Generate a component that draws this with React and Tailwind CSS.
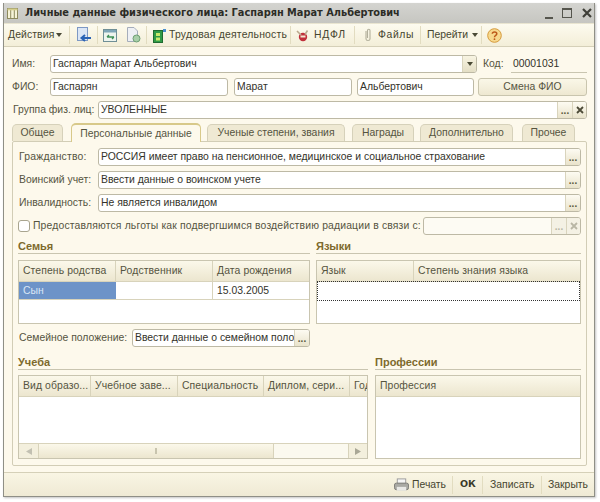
function Sep({ cls = "mx-[5px]" }) {
  return <div className={"w-px h-[18px] bg-[#e2dcc0] shrink-0 " + cls} />;
}
function Dots({ disabled }) {
  return (
    <div className={"w-[15px] h-full shrink-0 flex items-end justify-center pb-[2px] text-[10px] leading-[10px] font-bold " + (disabled ? "text-[#b9b6a5] bg-[#f4f1e4]" : "text-[#5c5a3c] bg-gradient-to-b from-[#fdfbf2] to-[#e9e3cb]") + " border-l border-[#d9d4bd]"}>...</div>
  );
}
function Field({ text, className = "", children }) {
  return (
    <div className={"h-[18px] bg-white border border-[#bdb9a5] rounded-[3px] flex items-stretch overflow-hidden shrink-0 " + className}>
      <div className="flex-1 min-w-0 pl-[2px] leading-[16px] whitespace-nowrap overflow-hidden text-[#33322a]">{text}</div>
      {children}
    </div>
  );
}
function Label({ children, className = "" }) {
  return <div className={"leading-[18px] whitespace-nowrap shrink-0 text-[#55543f] " + className}>{children}</div>;
}
function Heading({ children, className = "" }) {
  return (
    <div className={"border-b border-[#c9c5b0] h-[14px] shrink-0 " + className}>
      <div className="font-bold text-[#7d6a2c] leading-[12px] text-[11px] whitespace-nowrap">{children}</div>
    </div>
  );
}
function Th({ children, className = "" }) {
  return <div className={"h-full pl-[4px] leading-[20px] tracking-[0.01em] text-[#55543f] whitespace-nowrap overflow-hidden border-r border-[#d8d3bb] shrink-0 " + className}>{children}</div>;
}
function Thead({ children }) {
  return <div className="h-[21px] flex shrink-0 bg-gradient-to-b from-[#fbf8ea] to-[#ece6cf] border-b border-[#d8d3bb]">{children}</div>;
}
function Tab({ children, active, className = "" }) {
  return (
    <div className={"rounded-t-[5px] border border-b-0 text-center whitespace-nowrap shrink-0 text-[#55543f] " + (active ? "h-[19px] bg-[#fdf9ec] border-[#d8c98a] border-t-2 leading-[17px] relative z-10" : "h-[17px] mt-[1px] bg-[#efe9d3] border-[#d6d1ba] leading-[16px]") + " " + className}>{children}</div>
  );
}
function CloseX({ color = "#4d4b38" }) {
  return (
    <svg width="8" height="8" viewBox="0 0 8 8"><path d="M1 1L7 7M7 1L1 7" stroke={color} strokeWidth="1.8" /></svg>
  );
}
function Caret() {
  return <svg width="6" height="4" viewBox="0 0 6 4" className="shrink-0"><path d="M0 0H6L3 4Z" fill="#4a4935" /></svg>;
}

export default function App() {
  return (
    <div className="w-[600px] h-[502px] bg-white pt-[3px] pl-[3px] overflow-hidden text-[10.4px] font-['Liberation_Sans',sans-serif] text-[#3b3a2a]">
      <div className="w-[592px] h-[494px] border border-[#8f8f86] border-t-0 bg-[#fdf9ec] flex flex-col shadow-[1px_1px_2px_#c4c4c4]">
        {/* Title */}
        <div className="h-[20px] shrink-0 bg-gradient-to-b from-[#d4d4d0] to-[#c6c6c1] flex items-center pl-[3px] pr-[2px]">
          <svg width="11" height="11" viewBox="0 0 11 11" className="shrink-0">
            <rect x="0.5" y="0.5" width="10" height="10" fill="#f6f3d8" stroke="#8d8a5e" />
            <path d="M3.7 1V10M7.3 1V10" stroke="#8d8a5e" />
            <rect x="0.5" y="0.5" width="10" height="1.8" fill="#d6cf8c" />
          </svg>
          <div className="ml-[7px] font-['DejaVu_Sans',sans-serif] font-bold text-[9.8px] text-[#2c2c26] whitespace-nowrap">Личные данные физического лица: Гаспарян Марат Альбертович</div>
          <div className="ml-auto flex items-center">
            <div className="w-[8px] h-[2px] bg-[#55554d] mt-[9px]" />
            <div className="ml-[9px] w-[10px] h-[10px] border border-[#55554d] border-t-2" />
            <svg width="10" height="10" viewBox="0 0 10 10" className="ml-[10px]"><path d="M1 1L9 9M9 1L1 9" stroke="#3f3f38" strokeWidth="2.2" /></svg>
          </div>
        </div>
        {/* Toolbar */}
        <div className="h-[24px] shrink-0 flex items-center pl-[4px] bg-gradient-to-b from-[#fdfbef] to-[#f3eed8] border-b border-[#d5d0b8] border-t border-t-[#e9e5d0] text-[#46452f]">
          <span className="w-[48px] shrink-0 tracking-[0.01em]">Действия</span>
          <Caret />
          <div className="w-px shrink-0" />
          <Sep cls="ml-[6px] mr-[6px]" />
          <svg width="16" height="16" viewBox="0 0 16 16" className="shrink-0">
            <rect x="1.5" y="0.5" width="10" height="13" fill="#dbe6f5" stroke="#7d98c4" />
            <path d="M15 11H6M9 8L5.5 11L9 14" fill="none" stroke="#2a63b4" strokeWidth="2" />
          </svg>
          <Sep cls="ml-[5px] mr-[5px]" />
          <svg width="15" height="15" viewBox="0 0 15 15" className="shrink-0">
            <rect x="0.5" y="1.5" width="13" height="12" fill="#eef4ee" stroke="#6f8f96" />
            <rect x="1" y="2" width="12" height="2.5" fill="#7fa6b8" />
            <path d="M4 9H11M4 9L6 7M11 9L9 11" stroke="#3d8f55" strokeWidth="1.3" fill="none" />
          </svg>
          <svg width="15" height="16" viewBox="0 0 15 16" className="shrink-0 ml-[8px]">
            <path d="M1.5 0.5H8L11.5 4V14.5H1.5Z" fill="#eef0f4" stroke="#a5adbb" />
            <circle cx="10.5" cy="11.5" r="3.5" fill="#a9cfa9" stroke="#6e9f74" />
          </svg>
          <Sep cls="ml-[5px] mr-[6px]" />
          <svg width="14" height="15" viewBox="0 0 14 15" className="shrink-0">
            <rect x="0.5" y="2.5" width="9" height="12" fill="#2f9a47" stroke="#1f6b30" />
            <rect x="3" y="5" width="4" height="3" fill="#c8e96a" />
            <rect x="3" y="9.5" width="4" height="3" fill="#c8e96a" />
            <rect x="10" y="1" width="3" height="3" fill="#4a90d0" />
          </svg>
          <span className="ml-[2px] w-[117px] shrink-0 whitespace-nowrap tracking-[0.02em]">Трудовая деятельность</span>
          <Sep cls="ml-[4px] mr-[4px]" />
          <svg width="15" height="15" viewBox="0 0 15 15" className="shrink-0">
            <circle cx="8" cy="9" r="4.2" fill="#c02f3a" />
            <path d="M2 3L6 7M12.5 2.5L10 6.5" stroke="#bba98e" strokeWidth="1.6" />
            <rect x="5.5" y="7.5" width="5" height="2" fill="#f3e7d0" />
          </svg>
          <span className="ml-[4px] w-[34px] shrink-0 tracking-[0.08em]">НДФЛ</span>
          <Sep cls="ml-[6px] mr-[8px]" />
          <svg width="10" height="14" viewBox="0 0 10 14" className="shrink-0">
            <path d="M3 3V11C3 13 7 13 7 11V2.5C7 0.8 4.5 0.8 4.5 2.5V10" fill="none" stroke="#b3b09c" strokeWidth="1.1" />
          </svg>
          <span className="ml-[5px] w-[37px] shrink-0 tracking-[0.06em]">Файлы</span>
          <Sep cls="ml-[5px] mr-[6px]" />
          <span className="w-[41px] shrink-0">Перейти</span>
          <div className="ml-[4px]"><Caret /></div>
          <Sep cls="ml-[3px] mr-[5px]" />
          <svg width="15" height="15" viewBox="0 0 15 15" className="shrink-0">
            <circle cx="7.5" cy="7.5" r="6.8" fill="#f7d98e" stroke="#d59a3c" />
            <path d="M5.3 5.8C5.3 3.4 9.8 3.4 9.8 5.8C9.8 7.5 7.5 7.4 7.5 9.2" fill="none" stroke="#bd5a1a" strokeWidth="1.5" />
            <circle cx="7.5" cy="11.2" r="0.9" fill="#bd5a1a" />
          </svg>
        </div>
        {/* Header fields */}
        <div className="flex flex-col pl-[8px]">
          <div className="flex items-center mt-[8px]">
            <Label className="w-[38px]">Имя:</Label>
            <Field text="Гаспарян Марат Альбертович" className="w-[427px]">
              <div className="w-[14px] bg-gradient-to-b from-[#f8f4e2] to-[#e4dec5] border-l border-[#d9d4bd] flex items-center justify-center"><Caret /></div>
            </Field>
            <Label className="ml-[6px] w-[28px]">Код:</Label>
            <div className="w-[76px] h-[18px] border-b border-[#c9c5b0] pl-[2px] leading-[17px] text-[#33322a]">00001031</div>
          </div>
          <div className="flex items-center mt-[5px]">
            <Label className="w-[38px]">ФИО:</Label>
            <Field text="Гаспарян" className="w-[178px]" />
            <Field text="Марат" className="w-[118px] ml-[6px]" />
            <Field text="Альбертович" className="w-[117px] ml-[5px]" />
            <div className="w-[109px] ml-[4px] h-[18px] rounded-[3px] border border-[#c9c5ae] bg-gradient-to-b from-[#faf7e8] to-[#eee8d1] text-center leading-[16px] text-[#55543f]">Смена ФИО</div>
          </div>
          <div className="flex items-center mt-[5px]">
            <Label className="w-[86px] pl-[1px]">Группа физ. лиц:</Label>
            <Field text="УВОЛЕННЫЕ" className="w-[489px]">
              <Dots />
              <div className="w-[14px] flex items-center justify-center bg-gradient-to-b from-[#fdfbf2] to-[#e9e3cb] border-l border-[#d9d4bd]"><CloseX /></div>
            </Field>
          </div>
        </div>
        {/* Tabs */}
        <div className="flex mt-[4px] pl-[8px] items-start h-[18px] shrink-0">
          <Tab className="w-[51px]">Общее</Tab>
          <Tab active className="w-[130px] ml-[8px]">Персональные данные</Tab>
          <Tab className="w-[138px] ml-[6px]">Ученые степени, звания</Tab>
          <Tab className="w-[62px] ml-[7px]">Награды</Tab>
          <Tab className="w-[93px] ml-[6px]">Дополнительно</Tab>
          <Tab className="w-[53px] ml-[9px]">Прочее</Tab>
        </div>
        {/* Panel */}
        <div className="ml-[8px] w-[575px] h-[325px] border border-[#d2cdb6] rounded-[2px] flex flex-col pl-[5px] shrink-0">
          <div className="flex items-center mt-[6px]">
            <Label className="w-[80px] pl-[1px] tracking-[0.02em]">Гражданство:</Label>
            <Field text="РОССИЯ имеет право на пенсионное, медицинское и социальное страхование" className="w-[483px]"><Dots /></Field>
          </div>
          <div className="flex items-center mt-[5px]">
            <Label className="w-[80px] pl-[1px]">Воинский учет:</Label>
            <Field text="Ввести данные о воинском учете" className="w-[483px]"><Dots /></Field>
          </div>
          <div className="flex items-center mt-[5px]">
            <Label className="w-[80px] pl-[1px]">Инвалидность:</Label>
            <Field text="Не является инвалидом" className="w-[483px]"><Dots /></Field>
          </div>
          <div className="flex items-center mt-[5px]">
            <div className="w-[12px] h-[12px] rounded-[3px] border border-[#a9a58f] bg-white shrink-0" />
            <Label className="ml-[3px] w-[390px] tracking-[0.015em]">Предоставляются льготы как подвергшимся воздействию радиации в связи с:</Label>
            <Field text="" className="w-[158px] !bg-[#fdfbf3]">
              <Dots disabled />
              <div className="w-[14px] flex items-center justify-center bg-[#f4f1e4] border-l border-[#d9d4bd]"><CloseX color="#b9b6a5" /></div>
            </Field>
          </div>
          {/* Family / Languages */}
          <div className="flex mt-[5px]">
            <div className="w-[292px] flex flex-col shrink-0">
              <Heading>Семья</Heading>
              <div className="mt-[6px] h-[64px] border border-[#c9c5b0] bg-white flex flex-col">
                <Thead>
                  <Th className="w-[97px]">Степень родства</Th>
                  <Th className="w-[97px]">Родственник</Th>
                  <Th className="w-[96px] !border-r-0">Дата рождения</Th>
                </Thead>
                <div className="h-[18px] flex border-b border-[#d8d3bb] shrink-0">
                  <div className="w-[97px] bg-[#6d93c8] text-[#d9e6f6] pl-[4px] leading-[17px]">Сын</div>
                  <div className="w-[97px] border-r border-[#d8d3bb]" />
                  <div className="pl-[4px] leading-[17px] text-[#33322a]">15.03.2005</div>
                </div>
              </div>
              <div className="flex items-center mt-[5px]">
                <Label className="w-[114px] pl-[1px]">Семейное положение:</Label>
                <Field text="Ввести данные о семейном полож" className="w-[178px]"><Dots /></Field>
              </div>
            </div>
            <div className="w-[265px] ml-[6px] flex flex-col shrink-0">
              <Heading>Языки</Heading>
              <div className="mt-[6px] h-[64px] border border-[#c9c5b0] bg-white flex flex-col">
                <Thead>
                  <Th className="w-[97px]">Язык</Th>
                  <Th className="flex-1 !border-r-0">Степень знания языка</Th>
                </Thead>
                <div className="h-[20px] border border-dotted border-[#333] shrink-0 -mt-px" />
              </div>
            </div>
          </div>
          {/* Study / Professions */}
          <div className="flex mt-[9px]">
            <div className="w-[350px] flex flex-col shrink-0">
              <Heading>Учеба</Heading>
              <div className="mt-[5px] h-[84px] border border-[#c9c5b0] bg-white flex flex-col">
                <Thead>
                  <Th className="w-[72px]">Вид образо...</Th>
                  <Th className="w-[87px]">Учебное заве...</Th>
                  <Th className="w-[86px]">Специальность</Th>
                  <Th className="w-[86px]">Диплом, сери...</Th>
                  <Th className="flex-1 !border-r-0">Год</Th>
                </Thead>
                <div className="flex-1" />
                <div className="h-[15px] shrink-0 border-t border-[#d8d3bb] flex bg-[#fbf9ef]">
                  <div className="w-[20px] flex items-center justify-center border-r border-[#d8d3bb] bg-[#f3efdd]"><svg width="6" height="7" viewBox="0 0 6 7"><path d="M6 0V7L0 3.5Z" fill="#c2c0b2" /></svg></div>
                  <div className="w-[235px] bg-gradient-to-b from-[#fbf8ea] to-[#ece6cf] border-r border-[#d8d3bb] flex items-center justify-center"><div className="w-[2px] h-[6px] bg-[#c8c4ae]" /></div>
                  <div className="flex-1" />
                  <div className="w-[19px] flex items-center justify-center border-l border-[#d8d3bb] bg-[#f3efdd]"><svg width="6" height="7" viewBox="0 0 6 7"><path d="M0 0V7L6 3.5Z" fill="#a9a796" /></svg></div>
                </div>
              </div>
            </div>
            <div className="w-[206px] ml-[7px] flex flex-col shrink-0">
              <Heading>Профессии</Heading>
              <div className="mt-[5px] h-[84px] border border-[#c9c5b0] bg-white flex flex-col">
                <Thead>
                  <Th className="flex-1 !border-r-0">Профессия</Th>
                </Thead>
              </div>
            </div>
          </div>
        </div>
        {/* Footer */}
        <div className="mt-[6px] flex-1 border-t border-[#d5d0b8] bg-gradient-to-b from-[#f9f5e4] to-[#efead4] flex items-center justify-end pr-[5px] text-[#46452f]">
          <svg width="15" height="14" viewBox="0 0 16 14" className="shrink-0">
            <rect x="3.5" y="0.5" width="9" height="5" fill="#f5f5f5" stroke="#9a9a9a" />
            <rect x="0.5" y="5" width="15" height="7" rx="2" fill="#a9a9a4" stroke="#7b7b76" />
            <rect x="3" y="9" width="10" height="4" fill="#e9e9e6" />
          </svg>
          <span className="ml-[3px] w-[34px] shrink-0">Печать</span>
          <Sep cls="ml-[6px] mr-[7px]" />
          <span className="w-[15px] shrink-0 font-['DejaVu_Sans',sans-serif] font-bold text-[9.5px] text-[#3a3a28]">ОК</span>
          <Sep cls="ml-[7px] mr-[7px]" />
          <span className="w-[45px] shrink-0">Записать</span>
          <Sep cls="ml-[6px] mr-[6px]" />
          <span className="w-[41px] shrink-0">Закрыть</span>
        </div>
      </div>
    </div>
  );
}
